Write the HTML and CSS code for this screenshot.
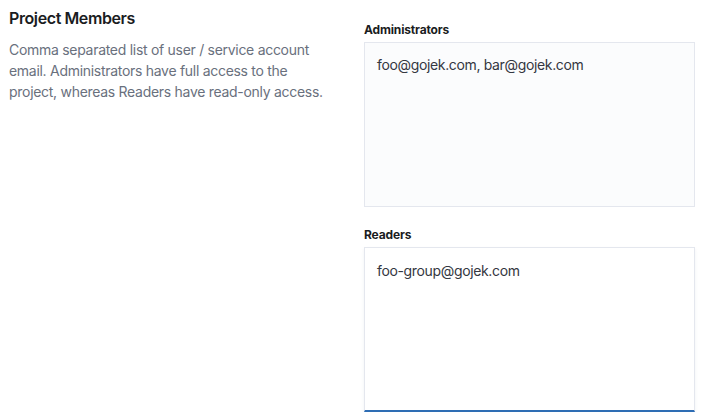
FILE: index.html
```html
<!DOCTYPE html>
<html>
<head>
<meta charset="utf-8">
<link rel="stylesheet" href="styles.css">
</head>
<body>
<div class="group">
  <div class="desc">
    <h3 class="title">Project Members</h3>
    <p class="text">Comma separated list of user / service account email. Administrators have full access to the project, whereas Readers have read-only access.</p>
  </div>
  <div class="fields">
    <div class="row">
      <label class="label">Administrators</label>
      <div class="area">foo@gojek.com, bar@gojek.com</div>
    </div>
    <div class="row">
      <label class="label">Readers</label>
      <div class="area focus">foo-group@gojek.com</div>
    </div>
  </div>
</div>
</body>
</html>
```
FILE: styles.css
```css
html, body {
  margin: 0;
  padding: 0;
  background: #ffffff;
}
body {
  font-family: Inter, "Noto Sans", sans-serif;
  color: #1a1c21;
}
.group {
  display: flex;
  padding: 6px 6px 0 9px;
}
.desc {
  width: 326px;
  flex: none;
}
.title {
  margin: 0;
  font-size: 16px;
  line-height: 24px;
  font-weight: 600;
  color: #1a1c21;
  letter-spacing: -0.4px;
}
.text {
  margin: 9px 0 0;
  font-size: 14px;
  line-height: 21px;
  color: #69707d;
  letter-spacing: -0.29px;
}
.fields {
  margin-left: 29px;
  width: 331px;
  padding-top: 15px;
  display: flex;
  flex-direction: column;
  gap: 19px;
}
.row {
  display: flex;
  flex-direction: column;
}
.label {
  font-size: 12px;
  line-height: 18px;
  font-weight: 700;
  color: #1a1c21;
  margin-bottom: 3px;
  letter-spacing: -0.15px;
}
.area {
  box-sizing: border-box;
  height: 165px;
  padding: 11px 12px;
  font-size: 14px;
  line-height: 21px;
  color: #343741;
  background: #fbfcfd;
  border: 1px solid #e4e7ee;
  letter-spacing: -0.35px;
}
.area.focus {
  background: #ffffff;
  padding-top: 12px;
  border-bottom: 2px solid #2e6db4;
  box-shadow: 0 2px 3px rgba(152, 162, 179, 0.15);
}
```
